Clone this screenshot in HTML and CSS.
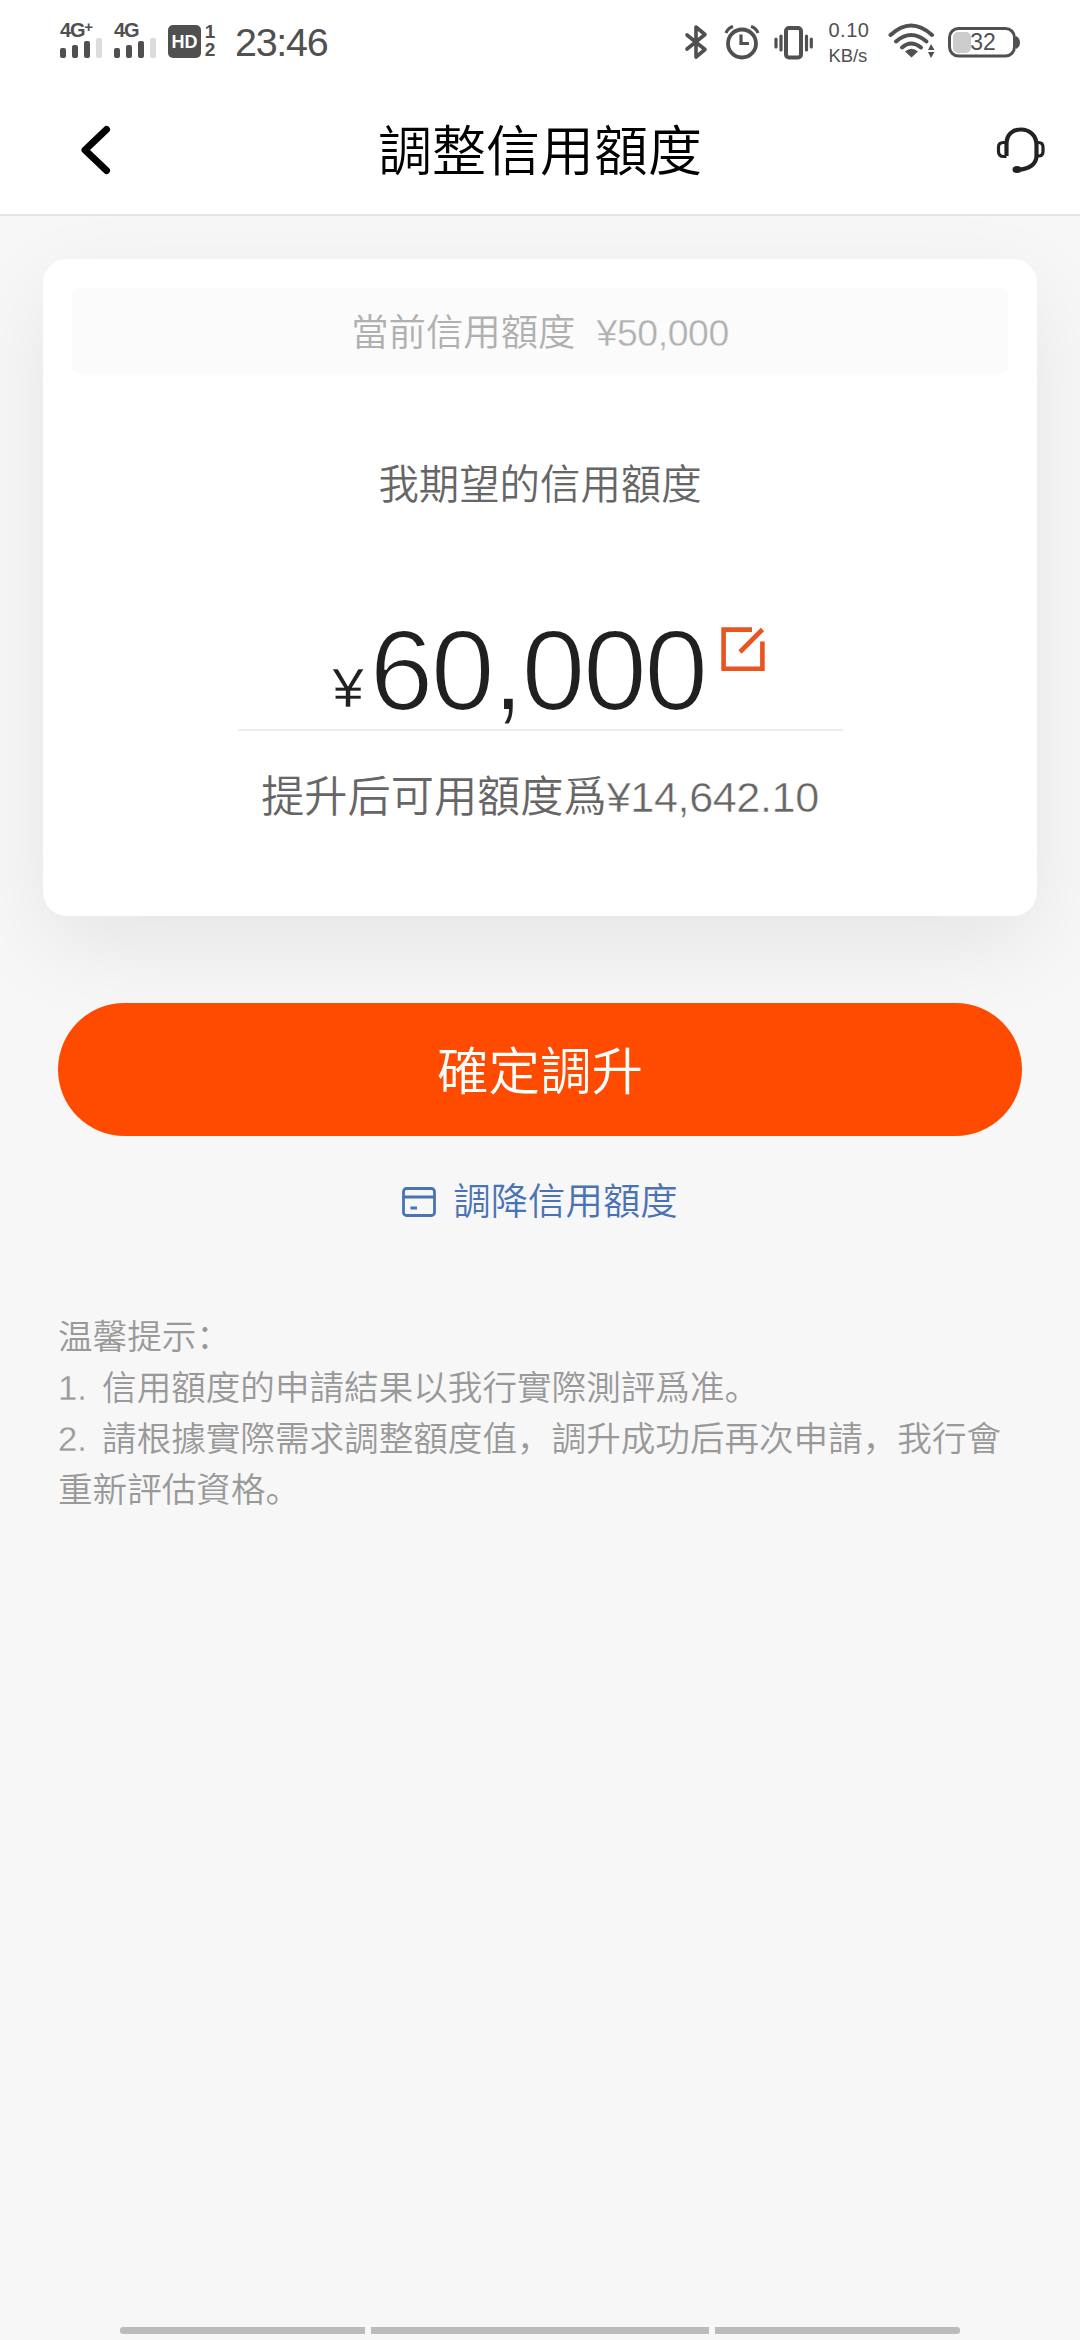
FILE: index.html
```html
<!DOCTYPE html>
<html lang="zh-CN">
<head>
<meta charset="utf-8">
<title>調整信用額度</title>
<link rel="stylesheet" href="styles.css">
</head>
<body>
<div class="top">
  <div class="status">
    <div class="status-left">
      <div class="sim"><span class="net">4G<sup>+</sup></span>
        <svg width="43" height="20" viewBox="0 0 43 20"><g fill="#505050"><rect x="0" y="10" width="6" height="10" rx="2"/><rect x="12" y="7" width="6" height="13" rx="2"/><rect x="24" y="3" width="6" height="17" rx="2"/></g><rect x="36" y="0" width="6" height="20" rx="2" fill="#dcdcdc"/></svg>
      </div>
      <div class="sim sim-two"><span class="net">4G</span>
        <svg width="43" height="20" viewBox="0 0 43 20"><g fill="#505050"><rect x="0" y="10" width="6" height="10" rx="2"/><rect x="12" y="7" width="6" height="13" rx="2"/><rect x="24" y="3" width="6" height="17" rx="2"/></g><rect x="36" y="0" width="6" height="20" rx="2" fill="#dcdcdc"/></svg>
      </div>
      <span class="hd">HD</span>
      <div class="slots"><span>1</span><span>2</span></div>
      <span class="clock">23:46</span>
    </div>
    <div class="status-right">
      <svg class="bt" width="24" height="36" viewBox="0 0 24 36" fill="none" stroke="#505050" stroke-width="3.6" stroke-linejoin="round" stroke-linecap="round"><path d="M3 11L21 25.500L12 33V3L21 10.500L3 25"/></svg>
      <svg class="alarm" width="36" height="36" viewBox="0 0 36 36" fill="none" stroke="#505050"><circle cx="18" cy="19.500" r="14" stroke-width="3.800"/><path d="M17 10.500V19.500H25" stroke-width="3.200"/><path d="M2 9Q4 4 9 2.500M34 9Q32 4 27 2.500" stroke-width="3.200"/></svg>
      <svg class="vib" width="39" height="36" viewBox="0 0 39 36" fill="none" stroke="#505050" stroke-width="3.200" stroke-linecap="round"><rect x="12" y="3" width="15" height="29.500" rx="3" stroke-width="4"/><path d="M7 11V25M2 14V22M32.500 11V25M37.300 14V22"/></svg>
      <div class="rate"><span>0.10</span><span>KB/s</span></div>
      <svg class="wifi" width="48" height="36" viewBox="0 0 48 36"><g fill="none" stroke="#505050" stroke-width="4" stroke-linecap="round"><path d="M2.500 12Q23 -7 44 12"/><path d="M8 18.500Q23 5.500 38.500 18.500"/><path d="M14 24.500Q23 16.500 33 24.500"/></g><path d="M17 28.500Q23.500 23 30 28.500L23.500 34.500Z" fill="#505050"/><path d="M40 27L43 21L46.500 27ZM40 29H46.500L43 35Z" fill="#505050"/></svg>
      <svg class="batt" width="72" height="32" viewBox="0 0 72 32"><rect x="5" y="5" width="18" height="21" rx="5" fill="#ccc"/><rect x="1.500" y="1.500" width="65" height="27.500" rx="9" fill="none" stroke="#505050" stroke-width="3"/><path d="M68 9Q72 11 72 15.500T68 22Z" fill="#505050"/><text x="35" y="23" text-anchor="middle" class="pct">32</text></svg>
    </div>
  </div>
  <div class="nav">
    <svg class="back" width="32" height="50" viewBox="0 0 32 50" fill="none" stroke="#000" stroke-width="7" stroke-linecap="round" stroke-linejoin="round"><path d="M26.500 4.500L5 25L26.500 45.500"/></svg>
    <h1>調整信用額度</h1>
    <svg class="service" width="50" height="48" viewBox="0 0 50 48" fill="none" stroke="#222" stroke-width="4.200"><path d="M10.500 29V17C10.500 7 17 2.500 25 2.500S40.500 8 40.500 18V29C40.500 37 33 42.500 22 42.500"/><path d="M10.500 15.500H7.500Q2.500 15.500 2.500 20V24.500Q2.500 29.500 7.500 29.500H10.500" stroke-width="3.200"/><path d="M40.500 15.500H42.500Q47 15.500 47 20V24.500Q47 29 42.500 29H40.500" stroke-width="3.200"/><ellipse cx="21" cy="42.500" rx="4.500" ry="3.500" fill="#222" stroke="none"/></svg>
  </div>
</div>
<main>
  <section class="card">
    <div class="current"><span>當前信用額度</span><span class="thin">¥50,000</span></div>
    <p class="wish">我期望的信用額度</p>
    <div class="amount">
      <span class="yen">¥</span><span class="num">60,000</span>
      <svg class="edit" width="44" height="45" viewBox="0 0 44 45" fill="none" stroke="#e95420" stroke-width="4.600"><path d="M31 2.600H2.600V41.700H41.400V14.500M41.500 2.500L19 25"/></svg>
    </div>
    <p class="after">提升后可用額度爲<span class="thin">¥14,642.10</span></p>
  </section>
  <button class="confirm">確定調升</button>
  <a class="lower"><svg width="34" height="30" viewBox="0 0 34 30" fill="none" stroke="#4a73b5" stroke-width="2.800"><rect x="1.500" y="1.500" width="31" height="27" rx="3"/><path d="M2 10H32M8.500 21H15"/></svg><span>調降信用額度</span></a>
  <div class="tips">
    <p>温馨提示：</p>
    <p><span class="no">1.&nbsp; </span>信用額度的申請結果以我行實際測評爲准。</p>
    <p><span class="no">2.&nbsp; </span>請根據實際需求調整額度值，調升成功后再次申請，我行會</p>
    <p>重新評估資格。</p>
  </div>
</main>
<footer class="gesture"><i></i><i class="mid"></i><i></i></footer>
</body>
</html>
```
FILE: styles.css
```css
* { box-sizing: border-box; margin: 0; padding: 0; }
body {
  display: flex;
  flex-direction: column;
  width: 1080px;
  height: 2340px;
  overflow: hidden;
  background: #f7f7f7;
  color: #666;
  font-family: "Liberation Sans", "Noto Sans CJK SC", sans-serif;
  font-weight: 350;
}
svg { display: block; flex: none; }
.top { height: 216px; flex: none; background: #fff; border-bottom: 2px solid #e5e5e5; position: relative; z-index: 1; }
.status { height: 84px; display: flex; justify-content: space-between; padding: 0 60px; color: #505050; }
.status-left, .status-right { display: flex; align-items: flex-start; }
.sim { width: 43px; padding-top: 20px; }
.sim-two { margin-left: 11px; }
.net { display: block; height: 18px; font: 700 20px/20px "Liberation Sans", sans-serif; letter-spacing: -1.2px; white-space: nowrap; }
.net sup { font-size: 15px; line-height: 0; vertical-align: 5px; }
.hd { margin: 25px 0 0 11px; width: 33px; height: 33px; border-radius: 5px; background: #505050; color: #fff; font: 700 18px/34px "Liberation Sans", sans-serif; text-align: center; }
.slots { width: 14px; margin: 23px 0 0 2px; display: flex; flex-direction: column; align-items: center; font: 700 19px/18px "Liberation Sans", sans-serif; }
.clock { margin: 21px 0 0 18px; font: 400 39.500px/42px "Liberation Sans", sans-serif; letter-spacing: -1.3px; }
.bt { margin-top: 24px; }
.alarm { margin: 24px 0 0 16px; }
.vib { margin: 25px 0 0 13.500px; }
.rate { width: 41px; margin: 18px 0 0 16px; display: flex; flex-direction: column; font: 400 20px/25px "Liberation Sans", sans-serif; letter-spacing: .5px; }
.rate span + span { font-size: 18.500px; letter-spacing: -.1px; }
.wifi { margin: 23px 0 0 18px; }
.batt { margin: 27px 0 0 12.500px; }
.pct { font: 400 23px "Liberation Sans", sans-serif; fill: #505050; }
.nav { height: 130px; display: flex; align-items: flex-start; justify-content: space-between; padding: 0 34px 0 80px; }
.back { margin-top: 41px; }
.nav h1 { margin: 28px 0 0 66px; flex: 1; font-size: 54px; line-height: 80px; font-weight: 350; color: #000; padding-left: 200px; }
.service { margin-top: 43px; }
main { flex: 1; display: flex; flex-direction: column; padding: 43px 43px 0; }
.card { height: 657px; border-radius: 24px; background: #fff; box-shadow: 0 30px 90px rgba(0,0,0,.075); padding: 29px 29px 0; display: flex; flex-direction: column; align-items: center; }
.current { width: 100%; height: 86px; border-radius: 9px; background: #fbfbfb; display: flex; justify-content: center; gap: 21px; font-size: 37.400px; line-height: 90px; color: #b0b0b0; }
.thin { -webkit-text-stroke: .5px #fff; }
.current .thin { -webkit-text-stroke: .4px #fbfbfb; letter-spacing: -.4px; }
.wish { margin-top: 81px; font-size: 40.400px; line-height: 60px; }
.amount { width: 605px; height: 149px; margin-top: 67px; border-bottom: 2px solid #ececec; display: flex; padding-left: 95px; color: #202020; }
.yen { width: 37px; font-size: 56px; line-height: 64px; margin-top: 74px; -webkit-text-stroke: .4px #fff; }
.num { font-size: 115px; line-height: 130px; letter-spacing: -2.600px; margin-top: 23px; width: 347px; white-space: nowrap; -webkit-text-stroke: 2.200px #fff; }
.edit { margin: 45px 0 0 4px; }
.after { margin-top: 36px; font-size: 43.200px; line-height: 60px; white-space: nowrap; }
.after .thin { letter-spacing: -.4px; }
.confirm { margin: 87px 15px 0; height: 133px; flex: none; border: 0; border-radius: 67px; background: #ff4b00; color: #fff; font: 350 51.500px/130px "Noto Sans CJK SC", sans-serif; padding-bottom: 5px; }
.lower { margin-top: 40px; height: 52px; display: flex; justify-content: center; align-items: center; gap: 17px; font-size: 37.400px; line-height: 52px; color: #4a73b5; }
.tips { margin: 84px 15px 0; font-size: 34.600px; line-height: 51px; color: #999; white-space: nowrap; }
.no { word-spacing: -2px; -webkit-text-stroke: .3px #f7f7f7; }
.gesture { height: 10px; margin: 0 120px 3px; display: grid; grid-template-columns: 245px 338px 245px; gap: 6px; flex: none; align-items: start; }
.gesture i { height: 7px; background: #bbb; border-radius: 3px 0 0 3px; }
.gesture .mid { border-radius: 0; }
.gesture i:last-child { border-radius: 0 3px 3px 0; }
```
